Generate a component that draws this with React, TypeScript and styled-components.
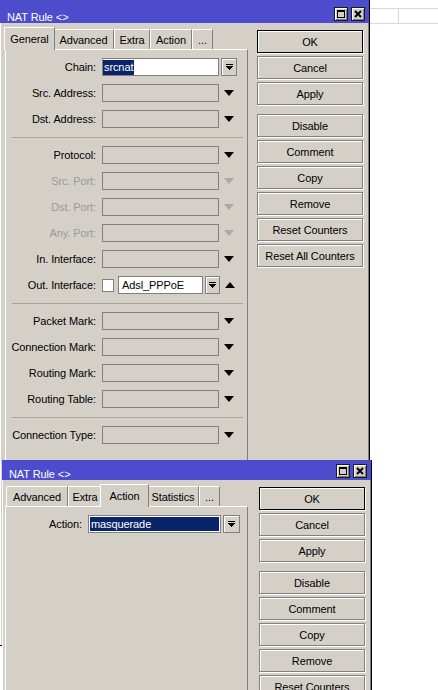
import React from "react"
import styled, { createGlobalStyle } from "styled-components"

const GlobalStyle = createGlobalStyle`
  html, body {
    margin: 0;
    padding: 0;
    background: #fff;
  }
  body {
    font-family: "Liberation Sans", Arial, sans-serif;
    font-size: 11px;
    letter-spacing: -0.1px;
    color: #000;
  }
`

const Face = "#d4d0c8"
const Shadow = "#808080"
const Title = "#4c4ccc"
const Select = "#0a246a"
const Disabled = "#9a9a9a"

type TabDef = { label: string; width: number; active?: boolean }

type RowDef =
  | { kind: "sep" }
  | {
      kind: "field"
      label: string
      value?: string
      tone?: "grey" | "white" | "selected"
      highlight?: boolean
      fieldWidth?: number
      drop?: number
      arrow?: "down" | "up"
      disabled?: boolean
      checkbox?: boolean
    }

const generalRows: RowDef[] = [
  { kind: "field", label: "Chain:", value: "srcnat", tone: "white", highlight: true, drop: 16 },
  { kind: "field", label: "Src. Address:", arrow: "down" },
  { kind: "field", label: "Dst. Address:", arrow: "down" },
  { kind: "sep" },
  { kind: "field", label: "Protocol:", arrow: "down" },
  { kind: "field", label: "Src. Port:", arrow: "down", disabled: true },
  { kind: "field", label: "Dst. Port:", arrow: "down", disabled: true },
  { kind: "field", label: "Any. Port:", arrow: "down", disabled: true },
  { kind: "field", label: "In. Interface:", arrow: "down" },
  {
    kind: "field",
    label: "Out. Interface:",
    checkbox: true,
    value: "Adsl_PPPoE",
    tone: "white",
    fieldWidth: 85,
    drop: 15,
    arrow: "up",
  },
  { kind: "sep" },
  { kind: "field", label: "Packet Mark:", arrow: "down" },
  { kind: "field", label: "Connection Mark:", arrow: "down" },
  { kind: "field", label: "Routing Mark:", arrow: "down" },
  { kind: "field", label: "Routing Table:", arrow: "down" },
  { kind: "sep" },
  { kind: "field", label: "Connection Type:", arrow: "down" },
]

const actionRows: RowDef[] = [
  { kind: "field", label: "Action:", value: "masquerade", tone: "selected", fieldWidth: 133, drop: 17 },
]

const buttons = [
  { label: "OK", primary: true },
  { label: "Cancel" },
  { label: "Apply" },
  { label: "Disable", spaced: true },
  { label: "Comment" },
  { label: "Copy" },
  { label: "Remove" },
  { label: "Reset Counters" },
  { label: "Reset All Counters" },
]

const DropIcon = () => (
  <svg width="7" height="7" viewBox="0 0 7 7" shapeRendering="crispEdges">
    <rect x="0" y="0" width="7" height="1" fill="#000" />
    <polygon points="0,2 7,2 3.5,6" fill="#000" />
  </svg>
)

const Triangle: React.FC<{ up?: boolean }> = ({ up }) => (
  <svg width="10" height="6" viewBox="0 0 10 6">
    <polygon points={up ? "0,6 10,6 5,0" : "0,0 10,0 5,6"} fill="currentColor" />
  </svg>
)

const MaxIcon = () => (
  <svg width="8" height="8" viewBox="0 0 8 8" shapeRendering="crispEdges">
    <rect x="0.5" y="0.5" width="7" height="7" fill="none" stroke="#000" />
    <rect x="0" y="0" width="8" height="2" fill="#000" />
  </svg>
)

const CloseIcon = () => (
  <svg width="8" height="8" viewBox="0 0 8 8">
    <path d="M1 1 L7 7 M7 1 L1 7" stroke="#000" strokeWidth="2" />
  </svg>
)

const PanelRows: React.FC<{ rows: RowDef[]; labelWidth: number }> = ({ rows, labelWidth }) => (
  <>
    {rows.map((row, i) => {
      if (row.kind === "sep") return <S.Separator key={i} />
      return (
        <S.Row key={i}>
          <S.Label $width={labelWidth} $disabled={row.disabled}>
            {row.label}
          </S.Label>
          {row.checkbox && <S.Checkbox />}
          <S.Field
            $width={row.fieldWidth ?? 117}
            $tone={row.tone ?? "grey"}
            $gap={row.checkbox ? 4 : 6}
            $inner={row.highlight ? 0 : row.tone === "white" ? 3 : 2}
          >
            {row.highlight ? <S.SelText>{row.value}</S.SelText> : row.value}
          </S.Field>
          {row.drop && (
            <S.DropButton $width={row.drop}>
              <DropIcon />
            </S.DropButton>
          )}
          {row.arrow && (
            <S.Arrow $disabled={row.disabled}>
              <Triangle up={row.arrow === "up"} />
            </S.Arrow>
          )}
        </S.Row>
      )
    })}
  </>
)

type WindowProps = {
  left: number
  top: number
  width: number
  height: number
  titleHeight: number
  tabInset: number
  tabs: TabDef[]
  rows: RowDef[]
  labelWidth: number
}

const NatWindow: React.FC<WindowProps> = (p) => (
  <S.Window $left={p.left} $top={p.top} $width={p.width} $height={p.height}>
    <S.TitleBar $height={p.titleHeight}>
      <S.TitleText>NAT Rule &lt;&gt;</S.TitleText>
      <S.TitleButtons>
        <S.TitleButton>
          <MaxIcon />
        </S.TitleButton>
        <S.TitleButton>
          <CloseIcon />
        </S.TitleButton>
      </S.TitleButtons>
    </S.TitleBar>
    <S.Body>
      <S.TabArea $inset={p.tabInset}>
        <S.TabStrip>
          {p.tabs.map((t) => (
            <S.Tab key={t.label} $width={t.width} $active={t.active}>
              {t.label}
            </S.Tab>
          ))}
        </S.TabStrip>
        <S.Panel>
          <PanelRows rows={p.rows} labelWidth={p.labelWidth} />
        </S.Panel>
      </S.TabArea>
      <S.Buttons>
        {buttons.map((b) => (
          <S.Button key={b.label} $primary={b.primary} $spaced={b.spaced}>
            {b.label}
          </S.Button>
        ))}
      </S.Buttons>
    </S.Body>
  </S.Window>
)

export default function App() {
  return (
    <>
      <GlobalStyle />
      <S.Desktop>
        <S.ListHeader>
          <S.ListCell />
          <S.ListCell $last />
        </S.ListHeader>
        <NatWindow
          left={0}
          top={0}
          width={370}
          height={646}
          titleHeight={23}
          tabInset={5}
          labelWidth={90}
          rows={generalRows}
          tabs={[
            { label: "General", width: 47, active: true },
            { label: "Advanced", width: 61 },
            { label: "Extra", width: 36 },
            { label: "Action", width: 42 },
            { label: "...", width: 21 },
          ]}
        />
        <NatWindow
          left={2}
          top={460}
          width={370}
          height={240}
          titleHeight={20}
          tabInset={3}
          labelWidth={76}
          rows={actionRows}
          tabs={[
            { label: "Advanced", width: 62 },
            { label: "Extra", width: 34 },
            { label: "Action", width: 45, active: true },
            { label: "Statistics", width: 52 },
            { label: "...", width: 21 },
          ]}
        />
      </S.Desktop>
    </>
  )
}

const S = {
  Desktop: styled.div`
    position: relative;
    width: 438px;
    height: 690px;
    box-sizing: border-box;
    padding-top: 8px;
    overflow: hidden;
    background: #fff;
  `,
  ListHeader: styled.div`
    margin-left: 370px;
    height: 16px;
    box-sizing: border-box;
    border-top: 1px solid #d9d9d9;
    border-bottom: 1px solid #d9d9d9;
    display: grid;
    grid-template-columns: 29px 1fr;
  `,
  ListCell: styled.div<{ $last?: boolean }>`
    border-right: ${(p) => (p.$last ? "none" : "1px solid #d9d9d9")};
  `,
  Window: styled.div<{ $left: number; $top: number; $width: number; $height: number }>`
    position: absolute;
    left: ${(p) => p.$left}px;
    top: ${(p) => p.$top}px;
    width: ${(p) => p.$width}px;
    height: ${(p) => p.$height}px;
    box-sizing: border-box;
    background: ${Face};
    border-right: 1px solid #000;
    border-bottom: 1px solid #000;
    box-shadow: inset 1px 0 0 #fff, inset -1px 0 0 ${Shadow};
    display: flex;
    flex-direction: column;
  `,
  TitleBar: styled.div<{ $height: number }>`
    height: ${(p) => p.$height}px;
    flex: none;
    background: ${Title};
    display: flex;
    align-items: flex-end;
    padding: 0 4px 0 7px;
  `,
  TitleText: styled.div`
    flex: 1;
    color: #fff;
    line-height: 12px;
    white-space: nowrap;
  `,
  TitleButtons: styled.div`
    display: flex;
    gap: 3px;
    margin-bottom: 2px;
  `,
  TitleButton: styled.div`
    width: 14px;
    height: 14px;
    box-sizing: border-box;
    background: ${Face};
    border: 1px solid #1a1a1a;
    box-shadow: inset 1px 1px 0 #fff, inset -1px -1px 0 ${Shadow};
    display: flex;
    align-items: center;
    justify-content: center;
  `,
  Body: styled.div`
    flex: 1;
    min-height: 0;
    display: flex;
  `,
  TabArea: styled.div<{ $inset: number }>`
    margin-left: ${(p) => p.$inset}px;
    width: 243px;
    flex: none;
    padding-top: 4px;
    padding-bottom: 5px;
    display: flex;
    flex-direction: column;
  `,
  TabStrip: styled.div`
    height: 22px;
    flex: none;
    display: flex;
    align-items: flex-end;
    padding-left: 1px;
  `,
  Tab: styled.div<{ $width: number; $active?: boolean }>`
    width: ${(p) => p.$width + (p.$active ? 4 : 0)}px;
    height: ${(p) => (p.$active ? 23 : 20)}px;
    margin: ${(p) => (p.$active ? "0 -2px -1px" : "0")};
    padding-bottom: ${(p) => (p.$active ? 1 : 0)}px;
    position: relative;
    z-index: ${(p) => (p.$active ? 2 : 1)};
    flex: none;
    box-sizing: border-box;
    background: ${Face};
    border-top: 1px solid #fff;
    border-left: 1px solid #fff;
    border-right: 1px solid ${Shadow};
    display: flex;
    align-items: center;
    justify-content: center;
    white-space: nowrap;
  `,
  Panel: styled.div`
    flex: 1;
    box-sizing: border-box;
    border: 1px solid;
    border-color: #fff ${Shadow} ${Shadow} #fff;
    padding-top: 4px;
  `,
  Row: styled.div`
    height: 26px;
    display: flex;
    align-items: center;
  `,
  Label: styled.span<{ $width: number; $disabled?: boolean }>`
    width: ${(p) => p.$width}px;
    flex: none;
    text-align: right;
    white-space: nowrap;
    color: ${(p) => (p.$disabled ? Disabled : "#000")};
  `,
  Checkbox: styled.span`
    width: 12px;
    height: 13px;
    margin-left: 6px;
    box-sizing: border-box;
    background: #fff;
    border: 1px solid ${Shadow};
    flex: none;
  `,
  Field: styled.div<{ $width: number; $tone: "grey" | "white" | "selected"; $gap: number; $inner: number }>`
    width: ${(p) => p.$width}px;
    height: 18px;
    margin-left: ${(p) => p.$gap}px;
    flex: none;
    box-sizing: border-box;
    border: 1px solid ${Shadow};
    background: ${(p) => (p.$tone === "white" ? "#fff" : p.$tone === "selected" ? Select : Face)};
    box-shadow: ${(p) => (p.$tone === "selected" ? "inset 0 0 0 1px #fff" : "none")};
    color: ${(p) => (p.$tone === "selected" ? "#fff" : "#000")};
    padding-left: ${(p) => p.$inner}px;
    display: flex;
    align-items: center;
    overflow: hidden;
    white-space: nowrap;
  `,
  SelText: styled.span`
    background: ${Select};
    color: #fff;
    line-height: 15px;
    padding: 0 1px;
  `,
  DropButton: styled.div<{ $width: number }>`
    width: ${(p) => p.$width}px;
    height: 18px;
    margin-left: 2px;
    flex: none;
    box-sizing: border-box;
    background: ${Face};
    border: 1px solid ${Shadow};
    box-shadow: inset 1px 1px 0 #fff;
    display: flex;
    align-items: center;
    justify-content: center;
  `,
  Arrow: styled.span<{ $disabled?: boolean }>`
    margin-left: 5px;
    display: flex;
    color: ${(p) => (p.$disabled ? "#a8a8a8" : "#000")};
  `,
  Separator: styled.div`
    margin: 5px 4px 4px 6px;
    border-top: 1px solid #aaa69e;
  `,
  Buttons: styled.div`
    margin-left: auto;
    margin-right: 6px;
    width: 106px;
    flex: none;
    padding-top: 7px;
    display: flex;
    flex-direction: column;
  `,
  Button: styled.div<{ $primary?: boolean; $spaced?: boolean }>`
    height: 23px;
    margin-top: ${(p) => (p.$spaced ? 9 : 3)}px;
    flex: none;
    box-sizing: border-box;
    background: ${Face};
    border: 1px solid ${(p) => (p.$primary ? "#000" : Shadow)};
    box-shadow: 1px 1px 0 #fff, inset 1px 1px 0 #fff;
    display: flex;
    align-items: center;
    justify-content: center;
    white-space: nowrap;
    &:first-child {
      margin-top: 0;
    }
  `,
}
